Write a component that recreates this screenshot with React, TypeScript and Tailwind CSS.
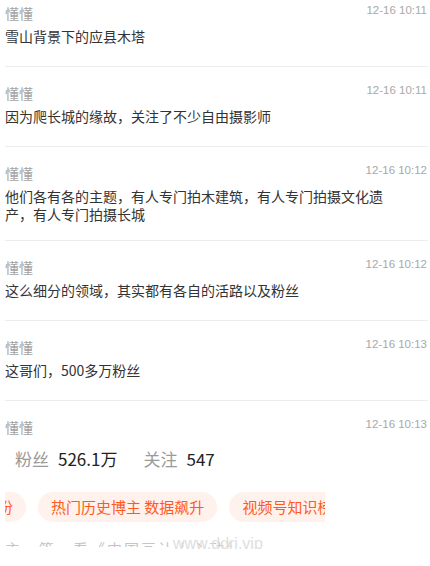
import React from "react";

const font = { fontFamily: '"Noto Sans CJK SC", "Noto Sans", sans-serif' };

type Msg = { name: string; time: string; text: string };

const messages: Msg[] = [
  { name: "懂懂", time: "12-16 10:11", text: "雪山背景下的应县木塔" },
  { name: "懂懂", time: "12-16 10:11", text: "因为爬长城的缘故，关注了不少自由摄影师" },
  {
    name: "懂懂",
    time: "12-16 10:12",
    text: "他们各有各的主题，有人专门拍木建筑，有人专门拍摄文化遗产，有人专门拍摄长城",
  },
  { name: "懂懂", time: "12-16 10:12", text: "这么细分的领域，其实都有各自的活路以及粉丝" },
  { name: "懂懂", time: "12-16 10:13", text: "这哥们，500多万粉丝" },
];

function Header({ name, time }: { name: string; time: string }) {
  return (
    <div className="flex items-start justify-between">
      <span className="text-[14px] leading-[20px] text-[#a3a3a3]">{name}</span>
      <span className="text-[11.5px] leading-[14px] text-[#a8a8a8] font-['Liberation_Sans',sans-serif] pr-[1px]">
        {time}
      </span>
    </div>
  );
}

function Pill({ children }: { children: React.ReactNode }) {
  return (
    <div className="shrink-0 h-[30px] px-[13px] rounded-full bg-[#fff2ec] text-[#ff5a1e] text-[15px] leading-[30px] whitespace-nowrap">
      {children}
    </div>
  );
}

export default function App() {
  return (
    <div className="bg-white w-[430px] h-[566px] overflow-hidden pl-[5px] pr-[2px]" style={font}>
      <div className="-mt-[13px]">
        {messages.map((m, i) => (
          <div key={i} className="pt-[16px] pb-[17px] border-b border-[#ededed]">
            <Header name={m.name} time={m.time} />
            <p className="mt-[4px] min-h-[22px] max-w-[380px] text-[14px] leading-[18px] text-[#333]">{m.text}</p>
          </div>
        ))}

        {/* last message: screenshot of a profile */}
        <div className="pt-[16px] pb-[26px] border-b border-[#ededed]">
          <Header name="懂懂" time="12-16 10:13" />
          <div className="mt-[9px] w-[320px] overflow-hidden">
            <div className="h-[26px] flex items-center pl-[10px] text-[17px] leading-[26px]">
              <span className="text-[#9a9a9a]">粉丝</span>
              <span className="ml-[9px] text-[#222]">526.1万</span>
              <span className="ml-[26px] text-[#9a9a9a]">关注</span>
              <span className="ml-[9px] text-[#222]">547</span>
            </div>
            <div className="mt-[20px] flex gap-[12px] overflow-hidden">
              <div className="shrink-0 w-[21px] overflow-hidden flex justify-end">
                <Pill>历史年份</Pill>
              </div>
              <Pill>热门历史博主 数据飙升</Pill>
              <Pill>视频号知识榜单</Pill>
            </div>
            <div className="relative mt-[17px] h-[10px]">
              <div className="h-[8px] overflow-hidden">
                <div className="text-[15px] leading-[20px] text-[#c4c4c4] whitespace-nowrap tracking-[2px]">
                  主　篇　看《中国画让人心动》
                </div>
              </div>
              <span className="absolute left-[168px] -top-[5px] text-[16px] leading-[20px] text-[#dedede] font-['Liberation_Sans',sans-serif]">
                www.ddrj.vip
              </span>
            </div>
          </div>
        </div>
      </div>
    </div>
  );
}
